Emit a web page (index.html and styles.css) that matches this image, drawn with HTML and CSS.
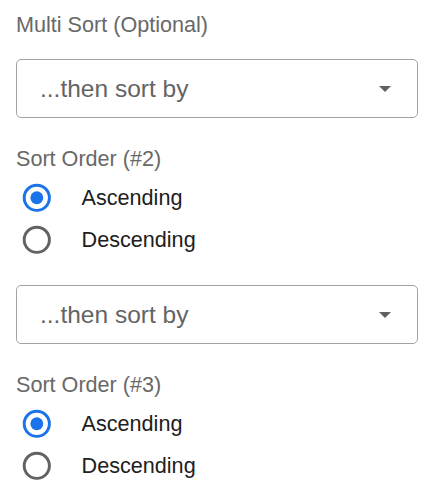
FILE: index.html
```html
<!DOCTYPE html>
<html>
<head>
<meta charset="utf-8">
<link rel="stylesheet" href="styles.css">
</head>
<body>
<div class="panel">
  <div class="label">Multi Sort (Optional)</div>

  <div class="group">
    <div class="select">
      <span class="select-text">...then sort by</span>
      <svg class="arrow" width="12" height="6" viewBox="0 0 12 6"><path d="M0 0h12L6 6z" fill="#606060"/></svg>
    </div>
    <div class="label label-order">Sort Order (#2)</div>
    <div class="radios">
      <div class="row">
        <svg class="radio" viewBox="0 0 24 24"><circle cx="12" cy="12" r="9" fill="none" stroke="#1a73e8" stroke-width="2.1"/><circle cx="12" cy="12" r="4.6" fill="#1a73e8"/></svg>
        <span class="opt">Ascending</span>
      </div>
      <div class="row">
        <svg class="radio" viewBox="0 0 24 24"><circle cx="12" cy="12" r="9" fill="none" stroke="#626262" stroke-width="2.1"/></svg>
        <span class="opt">Descending</span>
      </div>
    </div>
  </div>

  <div class="group">
    <div class="select">
      <span class="select-text">...then sort by</span>
      <svg class="arrow" width="12" height="6" viewBox="0 0 12 6"><path d="M0 0h12L6 6z" fill="#606060"/></svg>
    </div>
    <div class="label label-order">Sort Order (#3)</div>
    <div class="radios">
      <div class="row">
        <svg class="radio" viewBox="0 0 24 24"><circle cx="12" cy="12" r="9" fill="none" stroke="#1a73e8" stroke-width="2.1"/><circle cx="12" cy="12" r="4.6" fill="#1a73e8"/></svg>
        <span class="opt">Ascending</span>
      </div>
      <div class="row">
        <svg class="radio" viewBox="0 0 24 24"><circle cx="12" cy="12" r="9" fill="none" stroke="#626262" stroke-width="2.1"/></svg>
        <span class="opt">Descending</span>
      </div>
    </div>
  </div>
</div>
</body>
</html>
```

FILE: styles.css
```css
html, body {
  margin: 0;
  padding: 0;
  background: #ffffff;
}

body {
  font-family: "Liberation Sans", Arial, sans-serif;
}

.panel {
  padding: 12px 12px 0 16px;
}

.label {
  font-size: 21.6px;
  line-height: 26px;
  color: #686868;
}

.group {
  margin-top: 21px;
}

.group + .group {
  margin-top: 24px;
}

.select {
  box-sizing: border-box;
  height: 59px;
  border: 1px solid #a3a3a3;
  border-radius: 5px;
  display: flex;
  align-items: center;
  justify-content: space-between;
  padding: 0 26px 0 23px;
}

.select-text {
  font-size: 24.5px;
  line-height: 28px;
  color: #646464;
  margin-top: 1px;
}

.arrow {
  display: block;
  margin-top: 0;
}

.label-order {
  margin-top: 28px;
}

.radios {
  margin-top: 5px;
  display: flex;
  flex-direction: column;
}

.row {
  height: 42px;
  display: flex;
  align-items: center;
}

.radio {
  width: 33.6px;
  height: 33.6px;
  margin-left: 4px;
  flex: none;
}

.opt {
  margin-left: 28px;
  font-size: 21.6px;
  line-height: 26px;
  color: #202020;
}
```
